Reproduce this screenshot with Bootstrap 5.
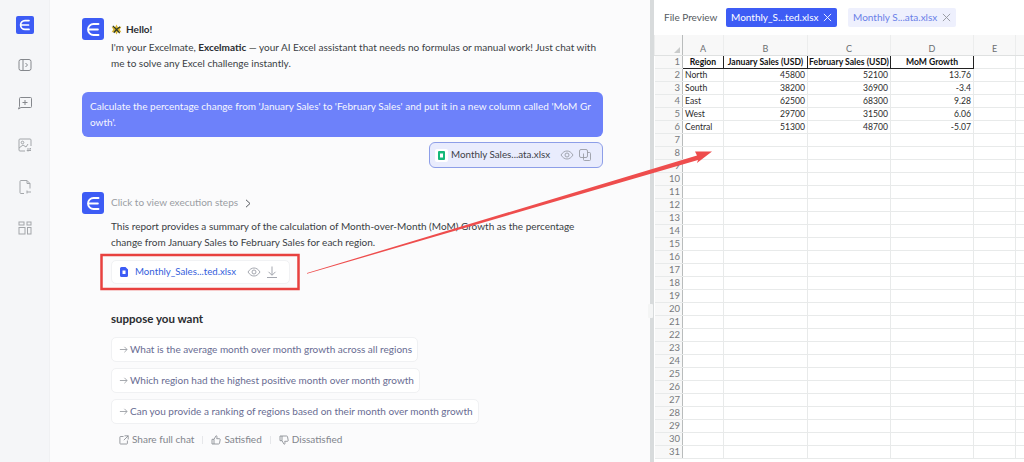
<!DOCTYPE html>
<html lang="en">
<head>
<meta charset="utf-8">
<title>Excelmatic</title>
<link href="https://cdn.jsdelivr.net/npm/bootstrap@5.3.0/dist/css/bootstrap.min.css" rel="stylesheet">
<style>
html,body{height:462px;overflow:hidden;background:#fff}
body{font-family:Lato,"Liberation Sans",sans-serif;font-size:10px;line-height:15.5px;color:#3a3e44}
.shell{height:462px;position:relative}
.rail{width:50px;flex:none;background:#f5f6f8;padding-top:16px;border-right:1px solid #f0f1f3}
.rail-logo{width:18px;height:18px;border-radius:2px;background:#3d5cf5}
.rail-ico{width:16px;height:16px;color:#85888d}
.rail-ico svg{display:block;width:100%;height:100%}
.m1{margin-top:23px}.m2{margin-top:22px}.m3{margin-top:26px}.m4{margin-top:26px}.m5{margin-top:25px}
.chat{width:600px;flex:none;background:#fbfbfc;padding:18px 47px 0 32px}
.logo-box{width:22px;height:22px;border-radius:3px;background:#3d5cf5;flex:none}
.msg-body{padding-left:7px;min-width:0;flex:1}
.hello{font-weight:700;color:#2a2c30;height:22px;display:flex;align-items:center;gap:4px;padding-top:1px}
.hello svg{width:11px;height:11px}
.intro b{color:#2a2c30}
.bubble{margin-top:21px;background:#6d81fa;color:#f6f7ff;border-radius:6px;padding:7px 8px 8px;height:45px;word-break:break-all}
.attach{width:174px;height:26px;margin:5px 0 0 auto;border:1px solid #8d9ee8;border-radius:6px;background:#e9ecfd;padding:0 10px 0 5px}
.xls-ico{width:13px;height:13px;background:#fff;border-radius:2px;flex:none}
.attach .nm{margin-left:3px;color:#3d4148;flex:1;white-space:nowrap;font-size:9.8px}
.tool{width:14px;height:14px;color:#9a9da6;flex:none}
.block2{margin-top:24px}
.steps{height:22px;color:#9a9da3;display:flex;align-items:center;gap:7px}
.para{margin-top:5px}
.result{width:179px;height:24px;margin-top:10px;background:#fff;border:1px solid #f1f2f4;border-radius:5px;padding:0 10px 0 8px}
.result .nm{margin-left:7px;color:#3560dc;flex:1;white-space:nowrap;font-size:9.7px}
.want{font-size:11.5px;font-weight:700;color:#2a2c30;margin-top:27px;line-height:16px}
.suggest{margin-top:10px;gap:6.5px}
.pick{height:24.500px;background:#fff;border:1px solid #f0f1f3;border-radius:5px;padding:0 5px 0 7px;color:#686c92;display:inline-flex;align-items:center;gap:2px;align-self:flex-start;white-space:nowrap}
.pick svg{width:9px;height:9px;color:#9da0a6}
.acts{margin-top:9px;padding-left:8px;color:#82858c;height:15px;white-space:nowrap}
.acts svg{width:10px;height:10px;margin-right:3px}
.act-sep{width:1px;height:8px;background:#e6e7ea;margin:0 8px}
.splitter{width:4px;flex:none;background:#d8dbdc;position:relative}
.handle{position:absolute;left:-2px;top:304px;width:5px;height:14px;background:#f4f5f5;border-radius:1px}
.pane{flex:1;min-width:0;background:#fff}
.pane-head{height:35px;padding:0 0 0 10px;gap:0}
.pv-label{color:#555a60;width:62px;white-space:nowrap}
.ftab{height:19px;border-radius:2px;padding:0 5px;white-space:nowrap;display:flex;align-items:center;justify-content:space-between}
.ftab svg{width:9px;height:9px}
.ftab-on{width:111px;background:#3d5cf5;color:#fff}
.ftab-off{width:108px;background:#eef0fd;color:#6a80e8;margin-left:11px}
.ftab-off svg{color:#92949c}
.sheet{table-layout:fixed;width:370px;margin:0;border-collapse:collapse;font-family:Lato,"Noto Sans",sans-serif;font-size:8.6px;line-height:12px;color:#2b2b2b}
.sheet th,.sheet td{height:13px;padding:0 2px;border:1px solid #e8eaea;background:#fff;overflow:hidden;white-space:nowrap;box-shadow:none;font-weight:400;color:#2b2b2b}
.sheet thead th{height:20px;background:#f8f8f8;color:#6b6e70;text-align:center;vertical-align:bottom;font-size:9px;border-top:0;border-bottom:1px solid #dfe1e1;border-left:1px solid #eceded;border-right:1px solid #eceded}
.sheet .rn{background:#f8f8f8;color:#777a7c;text-align:right;padding-right:2px;font-size:9.5px;border-left:0;border-right:1px solid #b9bcbc}
.sheet .corner{border-right:1px solid #b9bcbc;position:relative}
.sheet .corner i{position:absolute;right:2px;bottom:2px;border-style:solid;border-width:0 0 6px 6px;border-color:transparent transparent #c9cbcb transparent}
.sheet .hd{font-weight:700;text-align:center;border:1px solid #222;color:#111;padding:0}
.sheet .num{text-align:right}
.overlay{position:absolute;left:0;top:0;pointer-events:none}
</style>
</head>
<body>
<div class="shell d-flex">
  <nav class="rail d-flex flex-column align-items-center">
    <div class="rail-logo d-flex align-items-center justify-content-center">
      <svg width="12" height="12" viewBox="0 0 12 12"><path d="M10 1.6H6A4.400 4.400 0 0 0 6 10.400H10M2.300 6H9.500" fill="none" stroke="#fff" stroke-width="1.700" stroke-linecap="round"/></svg>
    </div>
    <div class="rail-ico m1"><svg viewBox="0 0 16 16" fill="none" stroke="currentColor" stroke-width="1"><rect x="2" y="2.500" width="12" height="11" rx="2"/><path d="M6 2.500v11M8.500 6l2 2-2 2"/></svg></div>
    <div class="rail-ico m2"><svg viewBox="0 0 16 16" fill="none" stroke="currentColor" stroke-width="1"><path d="M3.500 2.500h10a1 1 0 0 1 1 1v8a1 1 0 0 1-1 1H4l-2.500 1.500 1-2.500v-8a1 1 0 0 1 1-1z"/><path d="M8 5v5M5.500 7.500h5"/></svg></div>
    <div class="rail-ico m3"><svg viewBox="0 0 16 16" fill="none" stroke="#a3a6aa" stroke-width="1"><path d="M8 14H3a1 1 0 0 1-1-1V3a1 1 0 0 1 1-1h10a1 1 0 0 1 1 1v6"/><circle cx="5.500" cy="5.500" r="1.300"/><path d="M2 11l4-3 3 2 2-3M10 12h4l-1-1M14 13.500h-4l1 1"/></svg></div>
    <div class="rail-ico m4"><svg viewBox="0 0 16 16" fill="none" stroke="#a3a6aa" stroke-width="1"><path d="M7 14.500H4a1 1 0 0 1-1-1v-11a1 1 0 0 1 1-1h6l3 3v5"/><path d="M10 1.500v3h3M10 13h4M10 11.500v3"/></svg></div>
    <div class="rail-ico m5"><svg viewBox="0 0 16 16" fill="none" stroke="#a3a6aa" stroke-width="1"><rect x="2" y="2" width="5" height="3"/><rect x="10" y="2" width="4" height="3"/><rect x="2" y="7.500" width="6" height="6.500"/><rect x="10.500" y="7.500" width="3.500" height="6.500"/></svg></div>
  </nav>

  <main class="chat">
    <div class="d-flex">
      <div class="logo-box d-flex align-items-center justify-content-center"><svg width="15" height="15" viewBox="0 0 12 12"><path d="M10 1.600H6A4.400 4.400 0 0 0 6 10.400H10M2.300 6H9.500" fill="none" stroke="#fff" stroke-width="1.500" stroke-linecap="round"/></svg></div>
      <div class="msg-body">
        <div class="hello"><svg viewBox="0 0 12 12"><path d="M6 .5l1.500 3 3.800-.6-1.800 3.100 1.800 3.100-3.800-.6L6 11.500 4.500 8.500l-3.800.6L2.500 6 .7 2.900l3.800.6z" fill="#d9b52c"/><path d="M2 2l4 4 4-3M3 9.500l3-3.500 3.500 4" stroke="#2e3a2a" stroke-width="1.400" fill="none"/></svg>Hello!</div>
        <div class="intro">I'm your Excelmate, <b>Excelmatic</b> — your AI Excel assistant that needs no formulas or manual work! Just chat with me to solve any Excel challenge instantly.</div>
      </div>
    </div>

    <div class="bubble">Calculate the percentage change from 'January Sales' to 'February Sales' and put it in a new column called 'MoM Growth'.</div>
    <div class="attach d-flex align-items-center">
      <span class="xls-ico d-flex align-items-center justify-content-center"><svg width="7" height="9" viewBox="0 0 7 9"><rect width="7" height="9" rx="1" fill="#14b87a"/><rect x="2" y="2.500" width="3" height="4" fill="#fff"/></svg></span>
      <span class="nm">Monthly Sales...ata.xlsx</span>
      <svg class="tool" viewBox="0 0 14 14" fill="none" stroke="currentColor" stroke-width=".9"><path d="M1 7c1.700-2.700 3.700-4 6-4s4.300 1.300 6 4c-1.700 2.700-3.700 4-6 4S2.700 9.700 1 7z"/><circle cx="7" cy="7" r="2"/></svg>
      <svg class="tool ms-1" viewBox="0 0 14 14" fill="none" stroke="currentColor" stroke-width=".9"><rect x="1.500" y="1.500" width="8" height="8" rx="1.500"/><path d="M9.500 4.500h2a1 1 0 0 1 1 1v6a1 1 0 0 1-1 1h-5a1 1 0 0 1-1-1v-6"/></svg>
    </div>

    <div class="d-flex block2">
      <div class="logo-box d-flex align-items-center justify-content-center"><svg width="15" height="15" viewBox="0 0 12 12"><path d="M10 1.600H6A4.400 4.400 0 0 0 6 10.400H10M2.300 6H9.500" fill="none" stroke="#fff" stroke-width="1.500" stroke-linecap="round"/></svg></div>
      <div class="msg-body">
        <div class="steps">Click to view execution steps <svg width="6" height="9" viewBox="0 0 6 9" fill="none" stroke="#55585e"><path d="M1 .8l4 3.700-4 3.700"/></svg></div>
        <div class="para">This report provides a summary of the calculation of Month-over-Month (MoM) Growth as the percentage change from January Sales to February Sales for each region.</div>
        <div class="result d-flex align-items-center">
          <svg width="8" height="10" viewBox="0 0 8 10" class="flex-none"><path d="M1.500 0H5.500L8 2.500V8.500a1.500 1.500 0 0 1-1.500 1.500h-5A1.500 1.500 0 0 1 0 8.500V1.500A1.500 1.500 0 0 1 1.500 0z" fill="#3d5cf5"/><rect x="2.500" y="3.500" width="3" height="3.500" fill="#fff"/></svg>
          <span class="nm">Monthly_Sales...ted.xlsx</span>
          <svg class="tool" viewBox="0 0 14 14" fill="none" stroke="currentColor" stroke-width=".9"><path d="M1 7c1.700-2.700 3.700-4 6-4s4.300 1.300 6 4c-1.700 2.700-3.700 4-6 4S2.700 9.700 1 7z"/><circle cx="7" cy="7" r="2"/></svg>
          <svg class="tool ms-1" viewBox="0 0 14 14" fill="none" stroke="currentColor" stroke-width=".9"><path d="M7 1.500v8.500M3.500 6.800L7 10.300l3.500-3.500M2 12.500h10"/></svg>
        </div>
        <div class="want">suppose you want</div>
        <div class="suggest d-flex flex-column">
          <div class="pick"><svg viewBox="0 0 10 10" fill="none" stroke="currentColor"><path d="M1 5h8M6 2l3 3-3 3"/></svg>What is the average month over month growth across all regions</div>
          <div class="pick"><svg viewBox="0 0 10 10" fill="none" stroke="currentColor"><path d="M1 5h8M6 2l3 3-3 3"/></svg>Which region had the highest positive month over month growth</div>
          <div class="pick"><svg viewBox="0 0 10 10" fill="none" stroke="currentColor"><path d="M1 5h8M6 2l3 3-3 3"/></svg>Can you provide a ranking of regions based on their month over month growth</div>
        </div>
        <div class="acts d-flex align-items-center">
          <svg viewBox="0 0 10 10" fill="none" stroke="currentColor" stroke-width=".8"><path d="M4.500 1.500H1.500a.6.600 0 0 0-.6.600v6.300c0 .3.300.6.600.6h6.300c.3 0 .6-.3.600-.6V5.500M5.500.8h3.700v3.700M9.200.8L4.800 5.200"/></svg>Share full chat<span class="act-sep"></span>
          <svg viewBox="0 0 10 10" fill="none" stroke="currentColor" stroke-width=".8"><path d="M3 4.300L5 .8c.8 0 1.200.6 1 1.400L5.700 3.700h2.800c.5 0 .8.500.7 1L8.500 8.300c-.1.400-.4.700-.8.700H3zM3 4.300H1v4.700h2"/></svg>Satisfied<span class="act-sep"></span>
          <svg viewBox="0 0 10 10" fill="none" stroke="currentColor" stroke-width=".8"><path d="M3 5.700L5 9.200c.8 0 1.200-.6 1-1.400L5.700 6.300h2.800c.5 0 .8-.5.7-1L8.500 1.700C8.400 1.300 8.100 1 7.700 1H3zM3 5.700H1V1h2"/></svg>Dissatisfied
        </div>
      </div>
    </div>
  </main>

  <div class="splitter"><span class="handle"></span></div>

  <section class="pane">
    <div class="pane-head d-flex align-items-center">
      <span class="pv-label">File Preview</span>
      <span class="ftab ftab-on">Monthly_S...ted.xlsx<svg viewBox="0 0 10 10" stroke="currentColor" fill="none"><path d="M1 1l8 8M9 1L1 9"/></svg></span>
      <span class="ftab ftab-off">Monthly S...ata.xlsx<svg viewBox="0 0 10 10" stroke="currentColor" fill="none"><path d="M1 1l8 8M9 1L1 9"/></svg></span>
    </div>
    <table class="table sheet">
      <colgroup><col style="width:28px"><col style="width:41px"><col style="width:84px"><col style="width:83px"><col style="width:83px"><col style="width:42px"><col style="width:9px"></colgroup>
      <thead><tr><th class="corner"><i></i></th><th>A</th><th>B</th><th>C</th><th>D</th><th>E</th><th></th></tr></thead>
      <tbody>
        <tr><td class="rn">1</td><td class="hd">Region</td><td class="hd">January Sales (USD)</td><td class="hd">February Sales (USD)</td><td class="hd">MoM Growth</td><td></td><td></td></tr>
        <tr><td class="rn">2</td><td>North</td><td class="num">45800</td><td class="num">52100</td><td class="num">13.76</td><td></td><td></td></tr>
        <tr><td class="rn">3</td><td>South</td><td class="num">38200</td><td class="num">36900</td><td class="num">-3.4</td><td></td><td></td></tr>
        <tr><td class="rn">4</td><td>East</td><td class="num">62500</td><td class="num">68300</td><td class="num">9.28</td><td></td><td></td></tr>
        <tr><td class="rn">5</td><td>West</td><td class="num">29700</td><td class="num">31500</td><td class="num">6.06</td><td></td><td></td></tr>
        <tr><td class="rn">6</td><td>Central</td><td class="num">51300</td><td class="num">48700</td><td class="num">-5.07</td><td></td><td></td></tr>
        <tr><td class="rn">7</td><td></td><td></td><td></td><td></td><td></td><td></td></tr>
        <tr><td class="rn">8</td><td></td><td></td><td></td><td></td><td></td><td></td></tr>
        <tr><td class="rn">9</td><td></td><td></td><td></td><td></td><td></td><td></td></tr>
        <tr><td class="rn">10</td><td></td><td></td><td></td><td></td><td></td><td></td></tr>
        <tr><td class="rn">11</td><td></td><td></td><td></td><td></td><td></td><td></td></tr>
        <tr><td class="rn">12</td><td></td><td></td><td></td><td></td><td></td><td></td></tr>
        <tr><td class="rn">13</td><td></td><td></td><td></td><td></td><td></td><td></td></tr>
        <tr><td class="rn">14</td><td></td><td></td><td></td><td></td><td></td><td></td></tr>
        <tr><td class="rn">15</td><td></td><td></td><td></td><td></td><td></td><td></td></tr>
        <tr><td class="rn">16</td><td></td><td></td><td></td><td></td><td></td><td></td></tr>
        <tr><td class="rn">17</td><td></td><td></td><td></td><td></td><td></td><td></td></tr>
        <tr><td class="rn">18</td><td></td><td></td><td></td><td></td><td></td><td></td></tr>
        <tr><td class="rn">19</td><td></td><td></td><td></td><td></td><td></td><td></td></tr>
        <tr><td class="rn">20</td><td></td><td></td><td></td><td></td><td></td><td></td></tr>
        <tr><td class="rn">21</td><td></td><td></td><td></td><td></td><td></td><td></td></tr>
        <tr><td class="rn">22</td><td></td><td></td><td></td><td></td><td></td><td></td></tr>
        <tr><td class="rn">23</td><td></td><td></td><td></td><td></td><td></td><td></td></tr>
        <tr><td class="rn">24</td><td></td><td></td><td></td><td></td><td></td><td></td></tr>
        <tr><td class="rn">25</td><td></td><td></td><td></td><td></td><td></td><td></td></tr>
        <tr><td class="rn">26</td><td></td><td></td><td></td><td></td><td></td><td></td></tr>
        <tr><td class="rn">27</td><td></td><td></td><td></td><td></td><td></td><td></td></tr>
        <tr><td class="rn">28</td><td></td><td></td><td></td><td></td><td></td><td></td></tr>
        <tr><td class="rn">29</td><td></td><td></td><td></td><td></td><td></td><td></td></tr>
        <tr><td class="rn">30</td><td></td><td></td><td></td><td></td><td></td><td></td></tr>
        <tr><td class="rn">31</td><td></td><td></td><td></td><td></td><td></td><td></td></tr>
      </tbody>
    </table>
  </section>

  <svg class="overlay" width="1024" height="462" viewBox="0 0 1024 462">
    <rect x="101.500" y="255" width="197" height="34" fill="none" stroke="#e8413f" stroke-width="2.500"/>
    <polygon points="307,273 697,155.500 695,151.500 712,151.500 697,163 698,160 307,273.800" fill="#ee4d4d"/>
  </svg>
</div>
<script src="https://cdn.jsdelivr.net/npm/bootstrap@5.3.0/dist/js/bootstrap.bundle.min.js"></script>
</body>
</html>
